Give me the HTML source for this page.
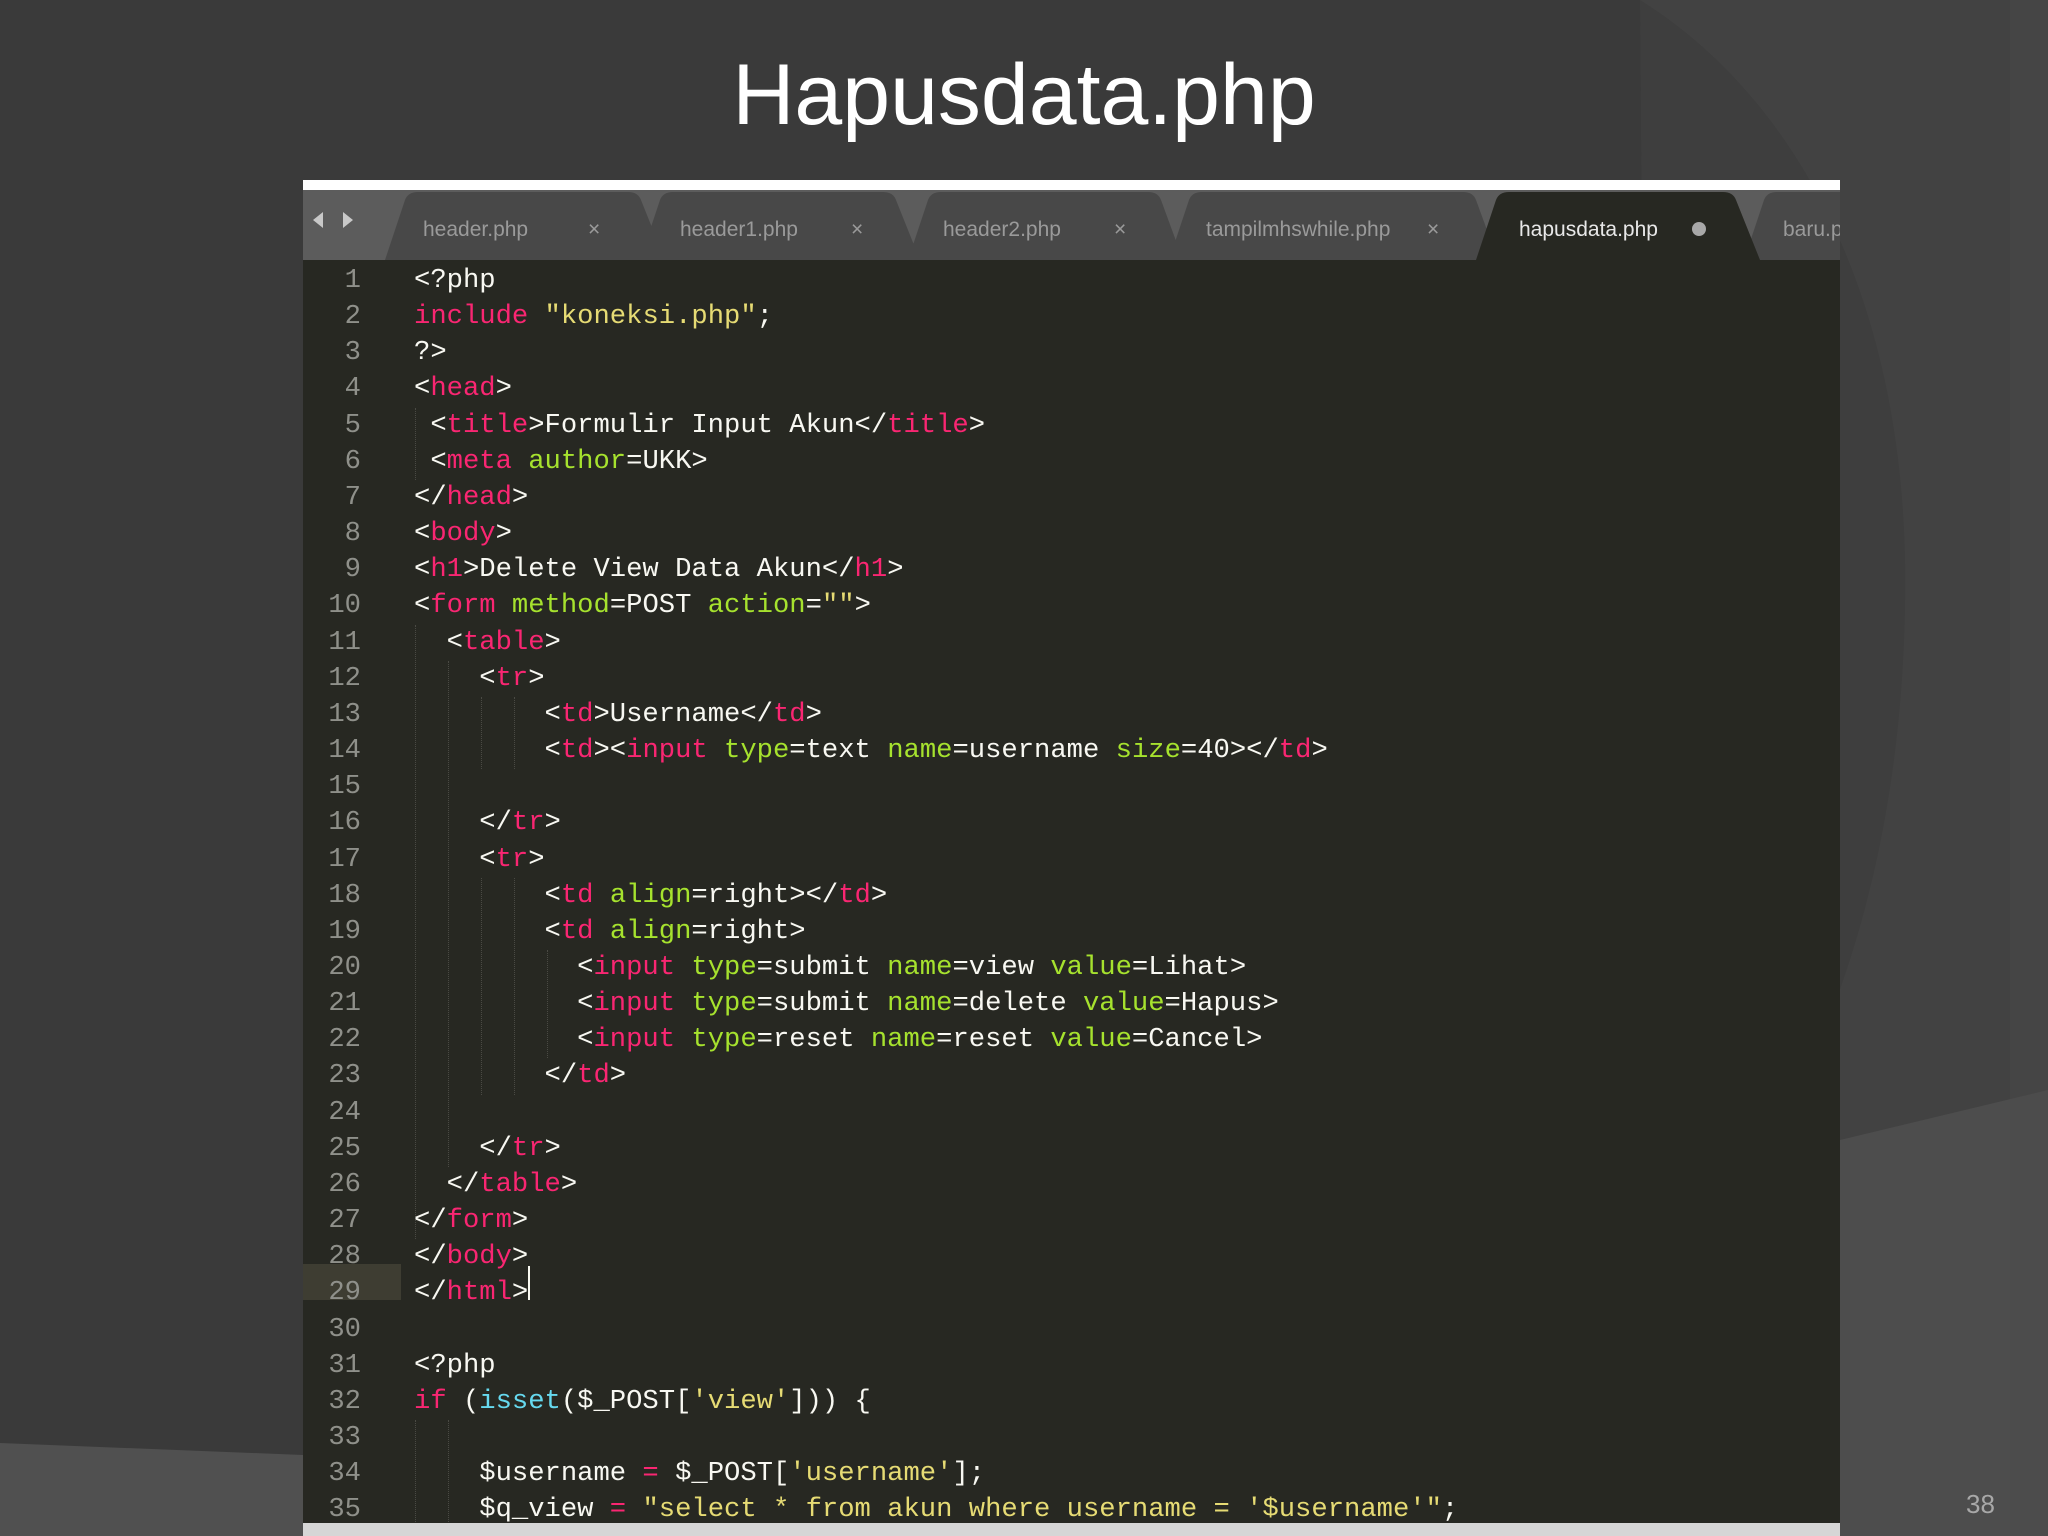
<!DOCTYPE html>
<html><head><meta charset="utf-8">
<style>
html,body{margin:0;padding:0;width:2048px;height:1536px;overflow:hidden}
body{position:relative;background:#3a3a3a;font-family:"Liberation Sans",sans-serif}
#bg{position:absolute;left:0;top:0}
h1{position:absolute;left:0;width:2048px;top:40px;margin:0;text-align:center;color:#fff;font-weight:normal;font-size:86px;line-height:110px}
#ed{position:absolute;left:303px;top:180px;width:1537px;height:1356px;background:#272822;overflow:hidden}
#wb{position:absolute;left:0;top:0;width:100%;height:10px;background:#fff}
#tabs{position:absolute;left:0;top:10px}
#hl{position:absolute;left:0;top:1084px;width:98px;height:36px;background:#3e3d32}
.code{position:absolute;top:83px;font-family:"Liberation Mono",monospace;font-size:27.2px;line-height:36.15px;white-space:pre}
#nums{left:0;width:58px;text-align:right;color:#8f908a}
#src{left:111px;color:#f8f8f2}
.k{color:#f92672}.s{color:#e6db74}.a{color:#a6e22e}.c{color:#66d9ef}.n{color:#ae81ff}
#cur{position:absolute;left:225px;top:1086px;width:2px;height:34px;background:#f8f8f0}
#bot{position:absolute;left:303px;top:1523px;width:1537px;height:13px;background:#d6d6d6}
#pn{position:absolute;left:1966px;top:1489px;color:#a8a8a8;font-size:26px}
.g{position:absolute;width:0;border-left:1px dotted #4a4a44}
</style></head><body>
<svg id="bg" width="2048" height="1536">
<rect width="2048" height="1536" fill="#3a3a3a"/>
<path d="M1640 0 L2048 0 L2048 1536 L1700 1536 Z" fill="#424242"/>
<path d="M1640 0 C1800 100 1900 300 1905 560 C1910 900 1800 1150 1650 1300 L1640 0 Z" fill="#3e3e3e"/>
<path d="M1840 1140 L2048 1090 L2048 1536 L1840 1536 Z" fill="#4d4d4d"/>
<path d="M0 1443 L303 1455 L303 1536 L0 1536 Z" fill="#505050"/>
<rect x="2010" y="0" width="38" height="1536" fill="#4a4a4a" opacity="0.4"/>
</svg>
<h1>Hapusdata.php</h1>
<div id="ed">
<div id="wb"></div>
<svg id="tabs" width="1537" height="70">
<rect width="1537" height="70" fill="#5c5c5c"/>
<path d="M10 30 L20 22 L20 38 Z M40 22 L50 30 L40 38 Z" fill="#c8c8c8"/>
<path d="M82 70 L102 10 Q105 2 115 2 L325 2 Q335 2 338 10 L362 70 Z" fill="#484848"/>
<path d="M337 70 L357 10 Q360 2 370 2 L580 2 Q590 2 593 10 L617 70 Z" fill="#484848"/>
<path d="M605 70 L625 10 Q628 2 638 2 L845 2 Q855 2 858 10 L880 70 Z" fill="#484848"/>
<path d="M866 70 L886 10 Q889 2 899 2 L1160 2 Q1170 2 1173 10 L1195 70 Z" fill="#484848"/>
<path d="M1441 70 L1461 10 Q1464 2 1474 2 L1537 2 L1537 70 Z" fill="#484848"/>
<path d="M1173 70 L1193 10 Q1196 2 1206 2 L1420 2 Q1430 2 1433 10 L1457 70 Z" fill="#272822"/>
<g font-family="Liberation Sans" font-size="21" fill="#9a9a9a">
<text x="120" y="46">header.php</text><text x="285" y="46">×</text>
<text x="377" y="46">header1.php</text><text x="548" y="46">×</text>
<text x="640" y="46">header2.php</text><text x="811" y="46">×</text>
<text x="903" y="46">tampilmhswhile.php</text><text x="1124" y="46">×</text>
<text x="1216" y="46" fill="#e8e8e8">hapusdata.php</text>
<circle cx="1396" cy="39" r="7" fill="#a8a8a8"/>
<text x="1480" y="46">baru.php</text>
</g>
</svg>
<div id="hl"></div>
<div class="code" id="nums">1
2
3
4
5
6
7
8
9
10
11
12
13
14
15
16
17
18
19
20
21
22
23
24
25
26
27
28
29
30
31
32
33
34
35</div>
<div class="g" style="left:112px;top:228px;height:72px"></div>
<div class="g" style="left:112px;top:445px;height:614px"></div>
<div class="g" style="left:145px;top:481px;height:506px"></div>
<div class="g" style="left:178px;top:517px;height:72px"></div>
<div class="g" style="left:211px;top:517px;height:72px"></div>
<div class="g" style="left:178px;top:698px;height:217px"></div>
<div class="g" style="left:211px;top:698px;height:217px"></div>
<div class="g" style="left:244px;top:770px;height:108px"></div>
<div class="g" style="left:112px;top:1240px;height:108px"></div>
<div class="g" style="left:145px;top:1240px;height:108px"></div>
<div class="code" id="src">&lt;?php
<span class="k">include</span> <span class="s">"koneksi.php"</span>;
?&gt;
&lt;<span class="k">head</span>&gt;
 &lt;<span class="k">title</span>&gt;Formulir Input Akun&lt;/<span class="k">title</span>&gt;
 &lt;<span class="k">meta</span> <span class="a">author</span>=UKK&gt;
&lt;/<span class="k">head</span>&gt;
&lt;<span class="k">body</span>&gt;
&lt;<span class="k">h1</span>&gt;Delete View Data Akun&lt;/<span class="k">h1</span>&gt;
&lt;<span class="k">form</span> <span class="a">method</span>=POST <span class="a">action</span>=<span class="s">""</span>&gt;
  &lt;<span class="k">table</span>&gt;
    &lt;<span class="k">tr</span>&gt;
        &lt;<span class="k">td</span>&gt;Username&lt;/<span class="k">td</span>&gt;
        &lt;<span class="k">td</span>&gt;&lt;<span class="k">input</span> <span class="a">type</span>=text <span class="a">name</span>=username <span class="a">size</span>=40&gt;&lt;/<span class="k">td</span>&gt;

    &lt;/<span class="k">tr</span>&gt;
    &lt;<span class="k">tr</span>&gt;
        &lt;<span class="k">td</span> <span class="a">align</span>=right&gt;&lt;/<span class="k">td</span>&gt;
        &lt;<span class="k">td</span> <span class="a">align</span>=right&gt;
          &lt;<span class="k">input</span> <span class="a">type</span>=submit <span class="a">name</span>=view <span class="a">value</span>=Lihat&gt;
          &lt;<span class="k">input</span> <span class="a">type</span>=submit <span class="a">name</span>=delete <span class="a">value</span>=Hapus&gt;
          &lt;<span class="k">input</span> <span class="a">type</span>=reset <span class="a">name</span>=reset <span class="a">value</span>=Cancel&gt;
        &lt;/<span class="k">td</span>&gt;

    &lt;/<span class="k">tr</span>&gt;
  &lt;/<span class="k">table</span>&gt;
&lt;/<span class="k">form</span>&gt;
&lt;/<span class="k">body</span>&gt;
&lt;/<span class="k">html</span>&gt;

&lt;?php
<span class="k">if</span> (<span class="c">isset</span>($_POST[<span class="s">'view'</span>])) {

    $username <span class="k">=</span> $_POST[<span class="s">'username'</span>];
    $q_view <span class="k">=</span> <span class="s">"select * from akun where username = '$username'"</span>;</div>
<div id="cur"></div>
</div>
<div id="bot"></div>
<div id="pn">38</div>
</body></html>
